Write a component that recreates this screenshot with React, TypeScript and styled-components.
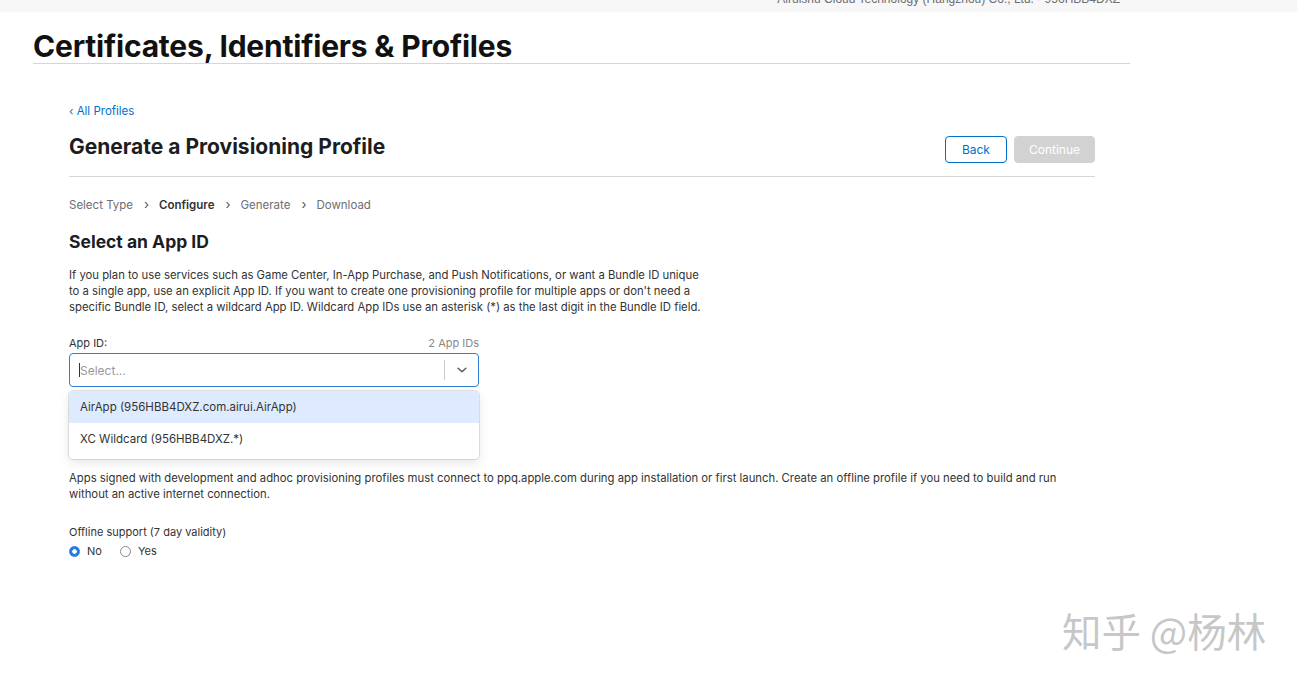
import styled, { createGlobalStyle } from 'styled-components';

const GlobalStyle = createGlobalStyle`
  html, body {
    margin: 0;
    padding: 0;
    background: #fff;
    font-family: Inter, "Liberation Sans", Arial, sans-serif;
    color: #1d1d1f;
  }
`;

const steps = [
  { name: 'Select Type', active: false },
  { name: 'Configure', active: true },
  { name: 'Generate', active: false },
  { name: 'Download', active: false },
];

const options = [
  { label: 'AirApp (956HBB4DXZ.com.airui.AirApp)', focused: true },
  { label: 'XC Wildcard (956HBB4DXZ.*)', focused: false },
];

const App = () => {
  return (
    <Page>
      <GlobalStyle />
      <TopBar>
        <span>Airuishu Cloud Technology (Hangzhou) Co., Ltd. - 956HBB4DXZ</span>
      </TopBar>
      <Header>
        <h1>Certificates, Identifiers &amp; Profiles</h1>
      </Header>
      <Main>
        <BackLink href="#">‹ All Profiles</BackLink>
        <TitleRow>
          <h2>Generate a Provisioning Profile</h2>
          <Actions>
            <Button>Back</Button>
            <Button $disabled>Continue</Button>
          </Actions>
        </TitleRow>
        <Steps>
          {steps.map((step, index) => (
            <Step key={index} $active={step.active}>
              {step.name}
              {index < steps.length - 1 && <Chevron>›</Chevron>}
            </Step>
          ))}
        </Steps>
        <SectionTitle>Select an App ID</SectionTitle>
        <Text>
          If you plan to use services such as Game Center, In-App Purchase, and Push Notifications, or want a Bundle ID unique
          <br />
          to a single app, use an explicit App ID. If you want to create one provisioning profile for multiple apps or don't need a
          <br />
          specific Bundle ID, select a wildcard App ID. Wildcard App IDs use an asterisk (*) as the last digit in the Bundle ID field.
        </Text>
        <Field>
          <FieldHead>
            <span>App ID:</span>
            <span className="count">2 App IDs</span>
          </FieldHead>
          <SelectBox>
            <Placeholder>
              <Caret />
              Select...
            </Placeholder>
            <Indicator>
              <svg width="14" height="14" viewBox="0 0 20 20">
                <path
                  d="M4.5 7.5 L10 12.5 L15.5 7.5"
                  fill="none"
                  stroke="#555"
                  strokeWidth="2"
                  strokeLinecap="round"
                  strokeLinejoin="round"
                />
              </svg>
            </Indicator>
          </SelectBox>
          <Menu>
            {options.map((option, index) => (
              <Option key={index} $focused={option.focused}>
                {option.label}
              </Option>
            ))}
          </Menu>
        </Field>
        <Text $top="83px">
          Apps signed with development and adhoc provisioning profiles must connect to ppq.apple.com during app installation or
          first launch. Create an offline profile if you need to build and run
          <br />
          without an active internet connection.
        </Text>
        <Offline>
          <span>Offline support (7 day validity)</span>
          <Radios>
            <RadioLabel>
              <Radio $checked />
              No
            </RadioLabel>
            <RadioLabel>
              <Radio />
              Yes
            </RadioLabel>
          </Radios>
        </Offline>
      </Main>
      <Watermark>知乎 @杨林</Watermark>
    </Page>
  );
};

const Page = styled.div`
  position: relative;
  width: 1297px;
  height: 683px;
  overflow: hidden;
`;

const TopBar = styled.div`
  height: 12px;
  background: #f7f7f7;
  display: flex;
  justify-content: flex-end;
  align-items: flex-end;
  padding: 0 177px 7px 0;
  box-sizing: border-box;
  overflow: hidden;
  span {
    font-family: "Liberation Sans", Arial, sans-serif;
    font-size: 12px;
    line-height: 12px;
    color: #6e6e73;
    white-space: nowrap;
  }
`;

const Header = styled.div`
  margin: 0 167px 0 33px;
  border-bottom: 1px solid #d6d6d6;
  h1 {
    margin: 0;
    padding: 17px 0 0;
    height: 34px;
    font-size: 30px;
    line-height: 34px;
    font-weight: 700;
    letter-spacing: -0.2px;
    color: #111;
  }
`;

const Main = styled.div`
  position: relative;
  width: 1026px;
  margin: 0 0 0 69px;
  padding-top: 39px;
`;

const BackLink = styled.a`
  display: block;
  font-size: 11.5px;
  line-height: 16px;
  color: #0070c9;
  text-decoration: none;
`;

const TitleRow = styled.div`
  display: flex;
  align-items: flex-start;
  justify-content: space-between;
  margin-top: 15px;
  padding-bottom: 13px;
  border-bottom: 1px solid #d6d6d6;
  h2 {
    margin: 0;
    font-size: 21px;
    line-height: 26px;
    font-weight: 700;
    color: #1d1d1f;
  }
`;

const Actions = styled.div`
  display: flex;
  gap: 7px;
  margin-top: 2px;
`;

const Button = styled.button<{ $disabled?: boolean }>`
  height: 27px;
  padding: 0 ${(p) => (p.$disabled ? '14px' : '16px')};
  font-family: Inter, "Liberation Sans", Arial, sans-serif;
  font-size: 12px;
  border-radius: 4px;
  border: 1px solid ${(p) => (p.$disabled ? '#d2d2d2' : '#0070c9')};
  background: ${(p) => (p.$disabled ? '#d2d2d2' : '#fff')};
  color: ${(p) => (p.$disabled ? '#fff' : '#0070c9')};
`;

const Steps = styled.div`
  display: flex;
  align-items: baseline;
  margin-top: 19px;
  font-size: 11.5px;
  line-height: 16px;
`;

const Step = styled.span<{ $active: boolean }>`
  color: ${(p) => (p.$active ? '#333' : '#6e6e73')};
  font-weight: ${(p) => (p.$active ? 600 : 400)};
`;

const Chevron = styled.span`
  display: inline-block;
  margin: 0 10px 0 11px;
  font-weight: 400;
  color: #555;
  font-size: 13px;
`;

const SectionTitle = styled.h3`
  margin: 18px 0 0;
  font-size: 17.5px;
  line-height: 22px;
  font-weight: 700;
  color: #1d1d1f;
`;

const Text = styled.p<{ $top?: string }>`
  margin: ${(p) => p.$top || '14px'} 0 0;
  font-size: 11.3px;
  line-height: 16px;
  color: #333;
  white-space: nowrap;
`;

const Field = styled.div`
  position: relative;
  width: 410px;
  margin-top: 21px;
`;

const FieldHead = styled.div`
  display: flex;
  justify-content: space-between;
  align-items: flex-end;
  font-size: 11px;
  line-height: 14px;
  color: #333;
  .count {
    color: #888;
    font-size: 11px;
  }
`;

const SelectBox = styled.div`
  display: flex;
  align-items: center;
  height: 34px;
  margin-top: 3px;
  box-sizing: border-box;
  border: 1.5px solid #2f7fd6;
  border-radius: 4px;
  background: #fff;
`;

const Placeholder = styled.div`
  flex: 1;
  display: flex;
  align-items: center;
  padding-left: 9px;
  font-size: 12px;
  color: #999;
`;

const Caret = styled.span`
  width: 1px;
  height: 14px;
  background: #333;
`;

const Indicator = styled.div`
  display: flex;
  align-items: center;
  justify-content: center;
  width: 33px;
  height: 20px;
  border-left: 1px solid #ccc;
`;

const Menu = styled.div`
  position: absolute;
  left: 0;
  right: 0;
  top: 55px;
  padding: 0 0 4px;
  background: #fff;
  border-radius: 4px;
  box-shadow: 0 0 0 1px rgba(0, 0, 0, 0.1), 0 4px 11px rgba(0, 0, 0, 0.1);
  overflow: hidden;
`;

const Option = styled.div<{ $focused: boolean }>`
  height: 32px;
  display: flex;
  align-items: center;
  padding-left: 11px;
  font-size: 11.5px;
  color: #333;
  background: ${(p) => (p.$focused ? '#deebff' : '#fff')};
`;

const Offline = styled.div`
  margin-top: 22px;
  font-size: 11px;
  line-height: 16px;
  color: #333;
`;

const Radios = styled.div`
  display: flex;
  gap: 18px;
  margin-top: 3px;
`;

const RadioLabel = styled.label`
  display: flex;
  align-items: center;
  gap: 7px;
  font-size: 11px;
  color: #333;
`;

const Radio = styled.span<{ $checked?: boolean }>`
  width: 11px;
  height: 11px;
  box-sizing: border-box;
  border-radius: 50%;
  border: 1px solid ${(p) => (p.$checked ? '#2a7ae2' : '#888')};
  background: ${(p) => (p.$checked ? 'radial-gradient(circle, #fff 0 2px, #2a7ae2 2.5px)' : '#fff')};
`;

const Watermark = styled.div`
  position: absolute;
  left: 1062px;
  top: 603px;
  font-family: "Noto Sans CJK SC", sans-serif;
  font-size: 39.5px;
  line-height: 54px;
  color: rgba(150, 150, 150, 0.55);
  text-shadow: 1px 1px 0 rgba(255, 255, 255, 0.8);
  white-space: nowrap;
`;

export default App;
